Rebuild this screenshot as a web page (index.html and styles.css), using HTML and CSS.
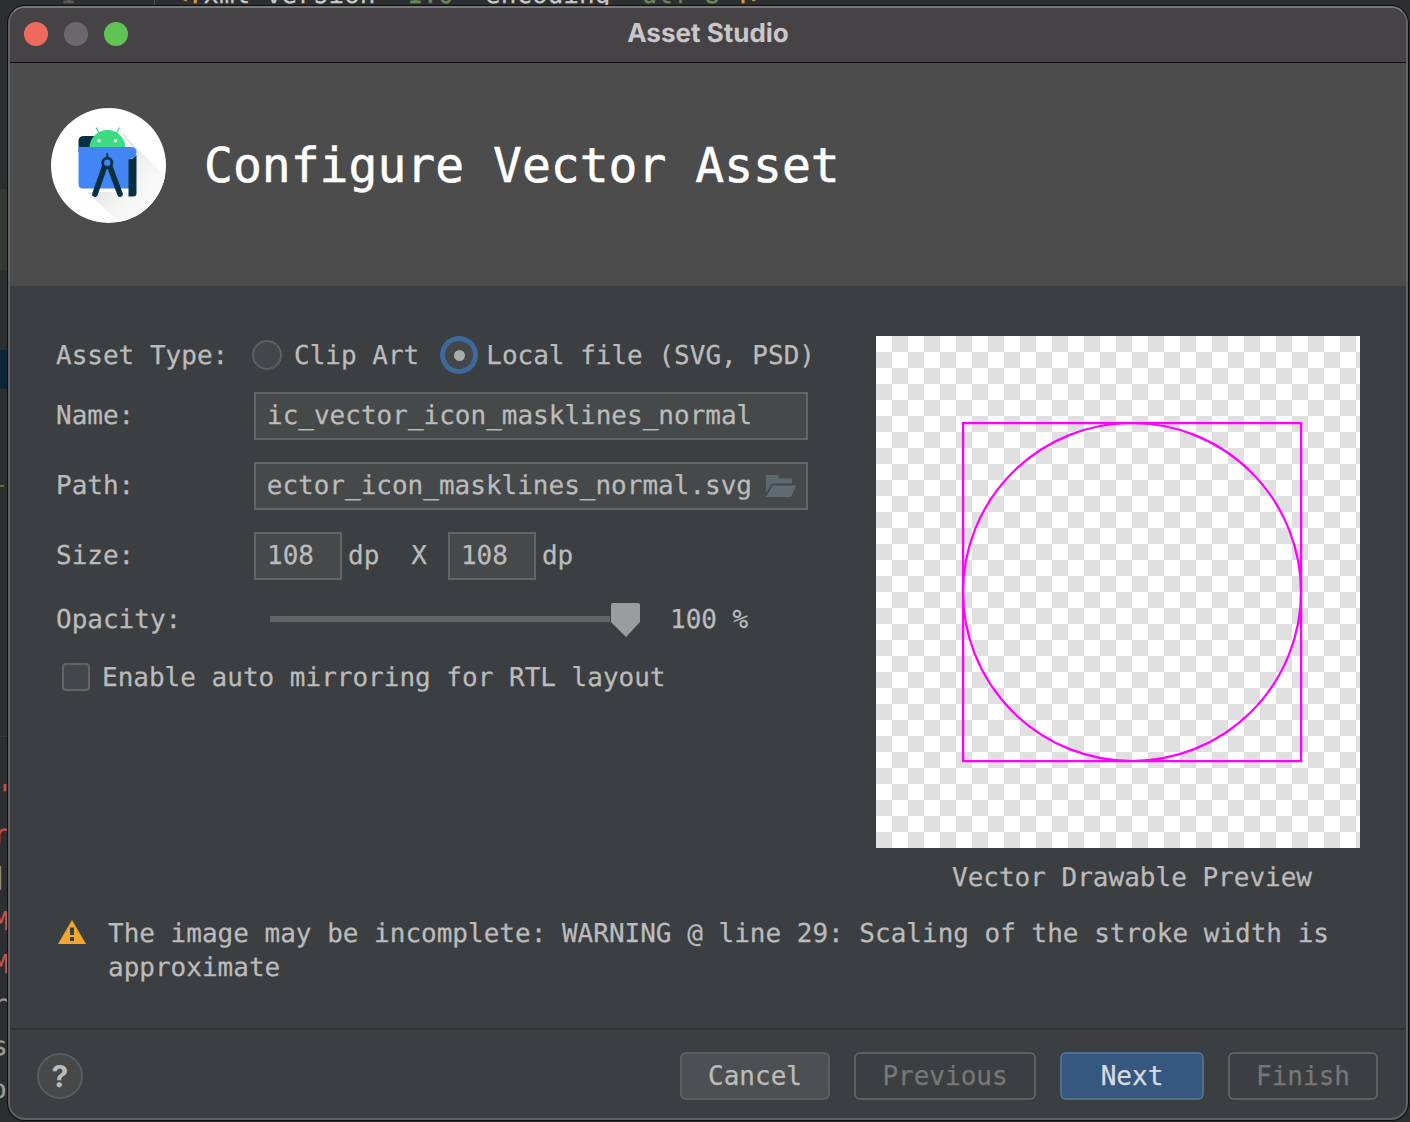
FILE: index.html
```html
<!DOCTYPE html>
<html lang="en">
<head>
<meta charset="utf-8">
<title>Asset Studio</title>
<link rel="stylesheet" href="styles.css">
</head>
<body>
<div class="backdrop">
  <div class="band band-green"></div>
  <div class="band band-blue"></div>
  <div class="band band-rule"></div>
  <div class="band band-mark"></div>
  <span class="gutter-num">1</span>
  <span class="gutter-line"></span>
  <div class="code-top"><span class="c-orange">&lt;?</span>xml version<span class="c-green">="1.0"</span> encoding<span class="c-green">="utf-8"</span><span class="c-orange">?&gt;</span></div>
  <span class="frag frag-1">'</span>
  <span class="frag frag-2">r</span>
  <span class="frag frag-3">]</span>
  <span class="frag frag-4">M</span>
  <span class="frag frag-5">M</span>
  <span class="frag frag-6">r</span>
  <span class="frag frag-7">s</span>
  <span class="frag frag-8">o</span>
</div>

<div class="window">
  <div class="titlebar">
    <div class="lights">
      <span class="light light-red"></span>
      <span class="light light-gray"></span>
      <span class="light light-green"></span>
    </div>
    <div class="window-title">Asset Studio</div>
  </div>

  <header class="banner">
    <svg class="logo" viewBox="0 0 115 115" width="115" height="115">
      <defs>
        <linearGradient id="sh" x1="0.15" y1="0.15" x2="0.95" y2="0.95">
          <stop offset="0" stop-color="#d6d6d6"/>
          <stop offset="0.55" stop-color="#f5f5f5"/>
          <stop offset="1" stop-color="#ffffff"/>
        </linearGradient>
        <clipPath id="disc"><circle cx="57.5" cy="57.5" r="57.5"/></clipPath>
      </defs>
      <circle cx="57.5" cy="57.5" r="57.5" fill="#fff"/>
      <polygon clip-path="url(#disc)" points="66,20 118,72 118,118 72,118 36,84 85,84 85,44" fill="url(#sh)"/>
      <path d="M27.5 33 Q27.5 28 33 28 H50 V44 H27.5 Z" fill="#073042"/>
      <path d="M38.5 40 A18 18 0 0 1 74.5 40 Z" fill="#3ddc84"/>
      <path d="M48.5 25.5 L45 19.5 M65 25.5 L68.5 19.5" stroke="#3ddc84" stroke-width="1.2" fill="none"/>
      <circle cx="48" cy="32.7" r="1.6" fill="#fff"/>
      <circle cx="64.7" cy="32.7" r="1.6" fill="#fff"/>
      <path d="M27.5 38.5 Q30 39 33 39 H80 Q85.5 39 85.5 44 Q85.5 50 80 50.5 V80.5 H32 Q27.5 80.5 27.5 76 Z" fill="#4285f4"/>
      <path d="M77.5 51.5 Q83 51 85.5 47 V85 Q85.5 88.5 82 88.5 H77.5 Z" fill="#073042"/>
      <path d="M53.5 59 L44 86 M59 59 L69 86" stroke="#073042" stroke-width="5.6" stroke-linecap="round" fill="none"/>
      <path d="M56.3 45 V50" stroke="#073042" stroke-width="1.8" fill="none"/>
      <circle cx="56.3" cy="54.7" r="4.6" fill="#4285f4" stroke="#073042" stroke-width="2.8"/>
    </svg>
    <h1 class="banner-title">Configure Vector Asset</h1>
  </header>

  <main class="body">
    <div class="columns">
      <form class="form">
        <div class="row row-type">
          <span class="label label-type nudge">Asset Type:</span>
          <span class="radio"></span>
          <span class="radio-text nudge">Clip Art</span>
          <span class="radio radio-on"><span class="radio-dot"></span></span>
          <span class="radio-text radio-text-on nudge">Local file (SVG, PSD)</span>
        </div>
        <div class="row row-field row-name">
          <span class="label">Name:</span>
          <div class="field field-wide"><span class="field-text">ic_vector_icon_masklines_normal</span></div>
        </div>
        <div class="row row-field">
          <span class="label">Path:</span>
          <div class="field field-wide">
            <span class="field-clip"><span>ic_vector_icon_masklines_normal.svg</span></span>
            <svg class="folder" viewBox="0 0 30 22" width="30" height="22">
              <path d="M0 0 H12 L13 3.5 H26 V8.5 H6 L0 18 Z" fill="#5b686e"/>
              <path d="M6.5 10.5 H30 L25 22 H0 Z" fill="#5e6a70"/>
            </svg>
          </div>
        </div>
        <div class="row row-field">
          <span class="label">Size:</span>
          <div class="field field-num"><span class="field-text">108</span></div>
          <span class="unit">dp</span>
          <span class="times">X</span>
          <div class="field field-num"><span class="field-text">108</span></div>
          <span class="unit">dp</span>
        </div>
        <div class="row row-slider">
          <span class="label label-slider nudge">Opacity:</span>
          <span class="track"></span>
          <svg class="thumb" viewBox="0 0 29 34" width="29" height="34">
            <path d="M2 0 H27 Q29 0 29 2 V19 L15 34 L0 19 V2 Q0 0 2 0 Z" fill="#9a9c9e"/>
          </svg>
          <span class="percent nudge">100 %</span>
        </div>
        <div class="row row-check">
          <span class="check"></span>
          <span class="check-text nudge">Enable auto mirroring for RTL layout</span>
        </div>
      </form>
      <aside class="preview-col">
        <svg class="preview" viewBox="0 0 484 512" width="484" height="512">
          <rect x="87.1" y="87.1" width="338" height="338" fill="none" stroke="#ff00ff" stroke-width="2.3"/>
          <circle cx="256" cy="256" r="169" fill="none" stroke="#ff00ff" stroke-width="2.2"/>
        </svg>
        <div class="caption">Vector Drawable Preview</div>
      </aside>
    </div>
    <div class="warning">
      <svg class="warn-icon" viewBox="0 0 28 24" width="28" height="24">
        <path d="M14 0 L28 24 H0 Z" fill="#f2a72e"/>
        <rect x="12" y="7.5" width="4" height="7.5" fill="#3c3f41"/>
        <rect x="12" y="17" width="4" height="4" fill="#3c3f41"/>
      </svg>
      <p class="warn-text">The image may be incomplete: WARNING @ line 29: Scaling of the stroke width is approximate</p>
    </div>
  </main>

  <footer class="footer">
    <span class="help">?</span>
    <div class="buttons">
      <button class="btn btn-cancel" type="button">Cancel</button>
      <button class="btn btn-off btn-prev" type="button">Previous</button>
      <button class="btn btn-next" type="button">Next</button>
      <button class="btn btn-off btn-finish" type="button">Finish</button>
    </div>
  </footer>
</div>
</body>
</html>
```
FILE: styles.css
```css
* { box-sizing: border-box; }
html, body { margin: 0; height: 100%; }
body {
  position: relative;
  width: 1410px;
  height: 1122px;
  overflow: hidden;
  background: #2c2e2f;
  font-family: "DejaVu Sans Mono", "Liberation Mono", monospace;
  font-size: 26px;
  color: #bbbbbb;
  text-rendering: geometricPrecision;
  -webkit-text-stroke: 0.25px currentColor;
}

/* Editor showing behind the dialog */
.backdrop { position: absolute; inset: 0; overflow: hidden; }
.band { position: absolute; left: 0; width: 8px; }
.band-green { top: 189px; height: 81px; background: #333a33; }
.band-blue { top: 350px; height: 39px; background: #0d2535; }
.band-rule { top: 736px; height: 1px; background: #3a3a3a; }
.band-mark { top: 485px; height: 2px; width: 4px; background: #4a7a3a; }
.gutter-num { position: absolute; left: 60px; top: -22px; line-height: 34px; color: #5a5a5a; }
.gutter-line { position: absolute; left: 154px; top: 0; width: 1px; height: 6px; background: #555; }
.code-top { position: absolute; left: 172px; top: -22px; line-height: 34px; white-space: pre; color: #c8c8c8; }
.c-orange { color: #d8a24a; }
.c-green { color: #6a8759; }
.frag { position: absolute; line-height: 34px; color: #9a9a9a; }
.frag-1 { left: -3px; top: 778px; color: #c75450; }
.frag-2 { left: -7px; top: 818px; color: #c75450; }
.frag-3 { left: -9px; top: 861px; }
.frag-4 { left: -7px; top: 905px; color: #c75450; }
.frag-5 { left: -7px; top: 948px; color: #c75450; }
.frag-6 { left: -8px; top: 988px; }
.frag-7 { left: -8px; top: 1030px; }
.frag-8 { left: -9px; top: 1073px; }

/* Dialog */
.window {
  position: absolute;
  left: 8px;
  top: 6px;
  width: 1400px;
  height: 1114px;
  display: flex;
  flex-direction: column;
  overflow: hidden;
  border: 2px solid #5f6162;
  border-top-color: #7a7a7a;
  border-radius: 17px;
  background: #3c3f41;
  box-shadow: 0 0 0 1px #0e0e0e;
}
.titlebar {
  position: relative;
  flex: none;
  height: 55px;
  display: flex;
  align-items: center;
  justify-content: center;
  background: #464346;
  border-bottom: 1px solid #0c0c0c;
}
.lights {
  position: absolute;
  left: 14px;
  top: 14px;
  display: flex;
  gap: 16px;
}
.light { width: 24px; height: 24px; border-radius: 50%; }
.light-red { background: #ee6a5f; }
.light-gray { background: #6b676a; }
.light-green { background: #5fc454; }
.window-title {
  font-family: Inter, "Liberation Sans", sans-serif;
  font-size: 26px;
  font-weight: 700;
  color: #c9c7c9;
  margin-top: -4px;
  -webkit-text-stroke: 0;
}

.banner {
  flex: none;
  height: 223px;
  padding: 45px 0 0 41px;
  display: flex;
  align-items: flex-start;
  gap: 38px;
  background: #4c4c4c;
}
.logo { flex: none; display: block; }
.banner-title {
  margin: 0;
  height: 115px;
  line-height: 117px;
  font-size: 48px;
  font-weight: 400;
  color: #ffffff;
  -webkit-text-stroke: 0.5px currentColor;
}

.body { flex: 1; padding: 50px 46px 0; min-height: 0; }
.columns { display: flex; justify-content: space-between; }
.form { flex: none; display: flex; flex-direction: column; }
.row { display: flex; align-items: center; white-space: pre; }
.label { flex: none; width: 198px; line-height: 34px; }
.nudge { padding-top: 2px; }
.row-type { height: 38px; }
.label-type { width: 196px; }
.row-field { height: 48px; margin-top: 22px; }
.row-name { margin-top: 18px; }
.radio {
  flex: none;
  width: 30px;
  height: 30px;
  border-radius: 50%;
  border: 2px solid #5e6060;
  background: #43474a;
}
.radio-text { margin-left: 12px; }
.radio-on {
  width: 28px;
  height: 28px;
  margin-left: 26px;
  border: 0;
  display: flex;
  align-items: center;
  justify-content: center;
  box-shadow: 0 0 0 5px #3d6a9b;
}
.radio-dot { width: 11px; height: 11px; border-radius: 50%; background: #aaaaaa; }
.radio-text-on { margin-left: 13px; }

.field {
  flex: none;
  height: 48px;
  display: flex;
  align-items: center;
  padding: 0 11px;
  border: 2px solid #646464;
  background: #45494a;
}
.field-wide { width: 554px; }
.field-num { width: 88px; }
.field-clip {
  flex: none;
  width: 485px;
  display: flex;
  justify-content: flex-end;
  overflow: hidden;
}
.field-clip span { flex: none; }
.folder { flex: none; margin-left: 14px; }
.unit { margin-left: 6px; }
.times { margin: 0 21px 0 32px; }
.row-slider { height: 38px; margin-top: 20px; }
.label-slider { width: 214px; }
.track { flex: none; width: 340px; height: 6px; background: #646464; }
.thumb { flex: none; margin-left: 1px; margin-top: 2px; }
.percent { margin-left: 30px; }
.row-check { height: 38px; margin-top: 20px; padding-left: 6px; }
.check {
  flex: none;
  width: 28px;
  height: 28px;
  border-radius: 4px;
  border: 2px solid #646464;
  background: #43474a;
}
.check-text { margin-left: 12px; }

.preview-col { flex: none; width: 484px; }
.preview {
  display: block;
  background-color: #ffffff;
  background-image: conic-gradient(#e0e0e0 25%, #ffffff 0 50%, #e0e0e0 0 75%, #ffffff 0);
  background-size: 32px 32px;
}
.caption { margin-top: 13px; line-height: 34px; text-align: center; margin-left: 28px; }

.warning { display: flex; align-items: flex-start; margin-top: 21px; padding-left: 2px; gap: 22px; }
.warn-icon { flex: none; margin-top: 4px; }
.warn-text { margin: 1px 0 0; line-height: 34px; }

.footer {
  flex: none;
  height: 90px;
  padding: 22px 28px 0 27px;
  display: flex;
  align-items: flex-start;
  justify-content: space-between;
  border-top: 2px solid #323232;
}
.help {
  width: 46px;
  height: 46px;
  margin-top: 1px;
  padding-top: 2px;
  display: flex;
  align-items: center;
  justify-content: center;
  border-radius: 50%;
  border: 2px solid #5a5c5e;
  background: #45494a;
  font-family: Inter, "Liberation Sans", sans-serif;
  font-size: 30px;
  font-weight: 700;
  color: #bbbbbb;
  -webkit-text-stroke: 0;
}
.buttons { display: flex; gap: 24px; }
.btn {
  height: 48px;
  padding: 0;
  border-radius: 6px;
  border: 2px solid #5e6060;
  background: transparent;
  font: inherit;
  color: #bbbbbb;
  -webkit-text-stroke: 0.25px currentColor;
}
.btn-cancel { width: 150px; background: #4c5052; }
.btn-prev { width: 182px; }
.btn-next { width: 144px; background: #365880; border-color: #4c708c; color: #d6dbe0; }
.btn-finish { width: 150px; }
.btn-off { color: #777777; }
```
